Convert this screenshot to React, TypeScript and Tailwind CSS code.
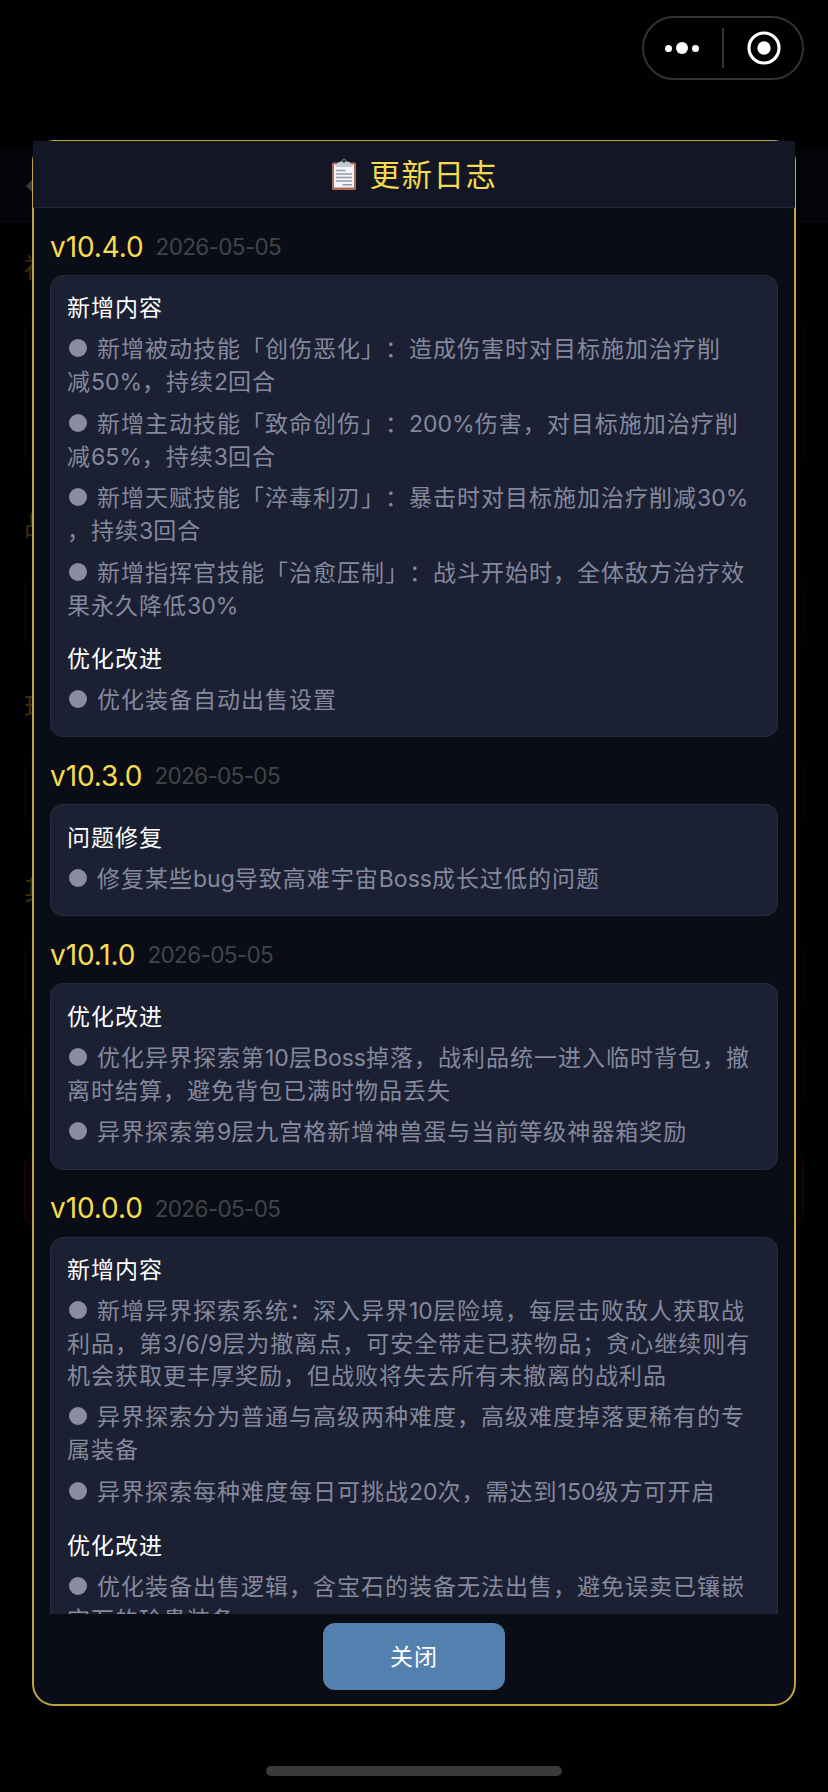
import { useState } from "react";

type Category = {
  title: string;
  // every item is a list of display lines
  items: string[][];
};

type Release = {
  version: string;
  date: string;
  categories: Category[];
};

const releases: Release[] = [
  {
    version: "v10.4.0",
    date: "2026-05-05",
    categories: [
      {
        title: "新增内容",
        items: [
          ["新增被动技能「创伤恶化」：造成伤害时对目标施加治疗削", "减50%，持续2回合"],
          ["新增主动技能「致命创伤」：200%伤害，对目标施加治疗削", "减65%，持续3回合"],
          ["新增天赋技能「淬毒利刃」：暴击时对目标施加治疗削减30%", "，持续3回合"],
          ["新增指挥官技能「治愈压制」：战斗开始时，全体敌方治疗效", "果永久降低30%"],
        ],
      },
      { title: "优化改进", items: [["优化装备自动出售设置"]] },
    ],
  },
  {
    version: "v10.3.0",
    date: "2026-05-05",
    categories: [
      { title: "问题修复", items: [["修复某些bug导致高难宇宙Boss成长过低的问题"]] },
    ],
  },
  {
    version: "v10.1.0",
    date: "2026-05-05",
    categories: [
      {
        title: "优化改进",
        items: [
          ["优化异界探索第10层Boss掉落，战利品统一进入临时背包，撤", "离时结算，避免背包已满时物品丢失"],
          ["异界探索第9层九宫格新增神兽蛋与当前等级神器箱奖励"],
        ],
      },
    ],
  },
  {
    version: "v10.0.0",
    date: "2026-05-05",
    categories: [
      {
        title: "新增内容",
        items: [
          [
            "新增异界探索系统：深入异界10层险境，每层击败敌人获取战",
            "利品，第3/6/9层为撤离点，可安全带走已获物品；贪心继续则有",
            "机会获取更丰厚奖励，但战败将失去所有未撤离的战利品",
          ],
          ["异界探索分为普通与高级两种难度，高级难度掉落更稀有的专", "属装备"],
          ["异界探索每种难度每日可挑战20次，需达到150级方可开启"],
        ],
      },
      {
        title: "优化改进",
        items: [["优化装备出售逻辑，含宝石的装备无法出售，避免误卖已镶嵌", "宝石的珍贵装备"]],
      },
    ],
  },
];

export default function App() {
  const [open, setOpen] = useState(true);

  return (
    <div className="relative h-[1792px] w-[828px] overflow-hidden bg-[#010103] font-['Lato','Noto_Sans_CJK_SC',sans-serif] [text-spacing-trim:space-all]">
      <SettingsPage />

      {open && (
        <div className="absolute inset-0 flex flex-col items-center pt-[140px]">
          <div className="flex h-[1566px] w-[764px] flex-col rounded-[22px] border-x-2 border-t border-b-2 border-[#bfa43f] bg-[#0a0d16]">
            <header className="-mx-px flex h-[67px] shrink-0 items-center justify-center gap-[13px] border-b border-[#25283a] bg-[#131624]">
              <ClipboardIcon />
              <h1 className="text-[30.5px] leading-none tracking-[1.5px] text-[#f5d94e]">更新日志</h1>
            </header>

            <div className="h-[1406px] shrink-0 overflow-hidden px-4 pt-[21.7px]">
              {releases.map(r => (
                <ReleaseBlock key={r.version} release={r} />
              ))}
            </div>

            <div className="flex justify-center pt-[9px]">
              <button
                onClick={() => setOpen(false)}
                className="h-[67px] w-[182px] rounded-xl bg-[#5480b0] text-[23px] tracking-[1px] text-white"
              >
                关闭
              </button>
            </div>
          </div>
        </div>
      )}

      <Capsule />
      <div className="absolute bottom-4 left-[266px] h-2.5 w-[296px] rounded-full bg-[#3a3a3c]" />
    </div>
  );
}

function ReleaseBlock({ release }: { release: Release }) {
  return (
    <section className="mb-[21.7px]">
      <div className="mb-[11.3px] flex h-[34px] items-center gap-3 font-['Inter',sans-serif]">
        <h2 className="text-[28px] leading-none tracking-[-0.1px] text-[#f7dc50]">{release.version}</h2>
        <span className="pt-px text-[22.5px] leading-none tracking-[-0.65px] text-[#424449]">{release.date}</span>
      </div>
      <div className="rounded-[13px] border border-[#292c3d] bg-[#1c2033] px-4 pt-[15.5px] pb-3">
        {release.categories.map((c, i) => (
          <div key={c.title} className={i > 0 ? "mt-[13px]" : ""}>
            <h3 className="mb-[7px] text-[23px] leading-[33px] tracking-[1px] text-white">{c.title}</h3>
            <ul className="flex flex-col">
              {c.items.map(lines => (
                <li key={lines[0]} className="mb-[8.4px] text-[23px] tracking-[1px] whitespace-nowrap text-[#85899c]">
                  {lines.map((line, n) => (
                    <p key={n} className={n === 0 ? "flex h-[34px] items-center leading-[34px]" : "h-8 leading-8"}>
                      {n === 0 && <span className="mr-[10px] ml-0.5 size-[18px] shrink-0 rounded-full bg-[#8a8da2]" />}
                      <MixedText text={line} />
                    </p>
                  ))}
                </li>
              ))}
            </ul>
          </div>
        ))}
      </div>
    </section>
  );
}

// Latin words and numbers are set without the extra tracking of the Chinese text
function MixedText({ text }: { text: string }) {
  return (
    <span>
      {text.split(/([\w%/]+)/).map((part, i) =>
        i % 2 ? <span key={i} className="font-['Inter',sans-serif] leading-none tracking-normal">{part}</span> : part
      )}
    </span>
  );
}

// Dimmed page that stays visible around the dialog
function SettingsPage() {
  return (
    <div className="flex flex-col pt-[150px] text-[27px] leading-9 text-[#3e2c0c]">
      <div className="flex h-[72px] items-center border-b border-[#08090d] bg-[#030407] pl-[26px]">
        <svg className="size-4" viewBox="0 0 16 16" fill="#3a3a3d">
          <path d="M0 8 L8 0 V16 Z" />
        </svg>
      </div>
      <p className="mt-7 pl-6">福利</p>
      <div className="mx-6 mt-[29px] h-[155px] rounded-2xl border border-[#06070b]" />
      <p className="mt-[38px] pl-6">战斗</p>
      <div className="mx-6 mt-[29px] h-[78px] rounded-2xl border border-[#06070b]" />
      <p className="mt-[38px] pl-6">玩法</p>
      <div className="mx-6 mt-[29px] h-[78px] rounded-2xl border border-[#06070b]" />
      <p className="mt-[40px] pl-6">其他</p>
      <div className="mx-6 mt-[29px] h-[78px] rounded-2xl border border-[#06070b]" />
      <div className="mx-6 mt-5 h-[78px] rounded-2xl border border-[#06070b]" />
      <div className="mx-6 mt-[37px] h-[78px] rounded-2xl border border-[#1c0608] bg-[#080203]" />
    </div>
  );
}

function Capsule() {
  return (
    <div className="absolute top-4 right-6 flex h-16 w-[162px] items-center rounded-full border-2 border-[#333] bg-black">
      <div className="flex flex-1 items-center justify-center gap-1">
        <span className="size-[7px] rounded-full bg-white" />
        <span className="size-3 rounded-full bg-white" />
        <span className="size-[7px] rounded-full bg-white" />
      </div>
      <span className="ml-px h-10 w-0.5 bg-[#333]" />
      <div className="flex flex-1 items-center justify-center pl-0.5">
        <svg className="size-[34px]" viewBox="0 0 34 34" fill="none">
          <circle cx="17" cy="17" r="15" stroke="#fff" strokeWidth="3.2" />
          <circle cx="17" cy="17" r="6.7" fill="#fff" />
        </svg>
      </div>
    </div>
  );
}

function ClipboardIcon() {
  return (
    <svg className="h-8 w-[26px]" viewBox="0 0 26 32">
      <rect x="1" y="4.5" width="24" height="27.5" rx="1.5" fill="#b06a5c" />
      <path d="M3 6.5h20v23H3z" fill="#f4f5f8" />
      <path d="M5 9V6.5l4-3h2a2.2 2.2 0 0 1 4.2 0h2l4 3V9z" fill="#c6cad3" />
      <circle cx="13" cy="2.8" r="1.7" fill="#1c2533" stroke="#6d7a86" strokeWidth="1" />
      <path d="M5 12.5h9.5M5 16h16M5 19.5h16M5 23h16M11.5 26.8H21" stroke="#8f9dac" strokeWidth="1.5" />
    </svg>
  );
}
